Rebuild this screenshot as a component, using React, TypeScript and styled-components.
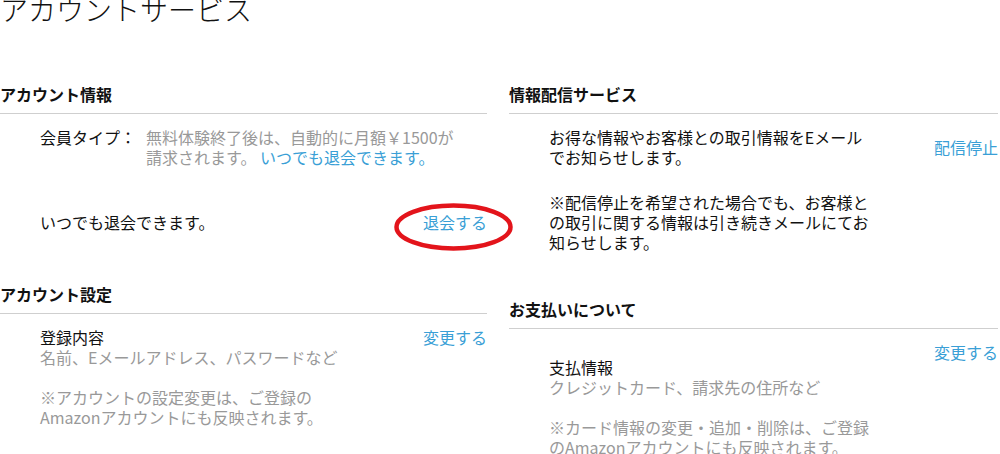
import React from "react";
import styled, { createGlobalStyle } from "styled-components";

const GlobalStyle = createGlobalStyle`
  html, body {
    margin: 0;
    padding: 0;
    background: #fff;
    overflow: hidden;
  }
  body {
    font-family: "Noto Sans CJK JP", "Noto Sans", sans-serif;
    color: #111;
    font-size: 16px;
    line-height: 20px;
  }
`;

const Page = styled.div`
  width: 998px;
`;

const Title = styled.h1`
  margin: -5px 0 0;
  font-size: 28px;
  line-height: 28px;
  font-weight: 300;
  color: #111;
`;

const Columns = styled.div`
  display: flex;
  gap: 22px;
  margin-top: 61px;
`;

const Column = styled.div<{ $width?: number }>`
  display: flex;
  flex-direction: column;
  ${(p: { $width?: number }) => (p.$width ? `width: ${p.$width}px;` : "flex: 1;")}
`;

const Section = styled.section<{ $gap?: number }>`
  margin-top: ${(p: { $gap?: number }) => p.$gap ?? 0}px;
`;

const Heading = styled.h2`
  margin: 0;
  padding-bottom: 9px;
  border-bottom: 1px solid #cfcfcf;
  font-size: 16px;
  line-height: 20px;
  font-weight: 700;
  color: #111;
`;

const Body = styled.div`
  padding: 13px 0 0 40px;
`;

const Row = styled.div<{ $align?: string; $top?: number }>`
  display: flex;
  justify-content: space-between;
  align-items: ${(p: { $align?: string }) => p.$align ?? "flex-start"};
  margin-top: ${(p: { $top?: number }) => p.$top ?? 0}px;
`;

const Content = styled.div<{ $offset?: number }>`
  padding-top: ${(p: { $offset?: number }) => p.$offset ?? 0}px;
`;

const Text = styled.p<{ $muted?: boolean; $top?: number }>`
  margin: ${(p: { $top?: number }) => p.$top ?? 0}px 0 0;
  color: ${(p: { $muted?: boolean }) => (p.$muted ? "#999" : "#111")};
`;

const Field = styled.div`
  display: grid;
  grid-template-columns: 106px auto;
`;

const Link = styled.a`
  position: relative;
  color: #3a9fd6;
  text-decoration: none;
  white-space: nowrap;
  cursor: pointer;
`;

// red hand-drawn marker around the withdraw link
const Circle = styled.svg`
  position: absolute;
  left: -29px;
  top: -9px;
  width: 119px;
  height: 48px;
  overflow: visible;
  pointer-events: none;
`;

export default function App() {
  return (
    <>
      <GlobalStyle />
      <Page>
        <Title>アカウントサービス</Title>
        <Columns>
          <Column $width={487}>
            <Section>
              <Heading>アカウント情報</Heading>
              <Body>
                <Field>
                  <span>会員タイプ：</span>
                  <Text $muted>
                    無料体験終了後は、自動的に月額￥1500が
                    <br />
                    請求されます。 <Link>いつでも退会できます。</Link>
                  </Text>
                </Field>
                <Row $top={45} $align="center">
                  <span>いつでも退会できます。</span>
                  <Link>
                    退会する
                    <Circle viewBox="0 0 119 48">
                      <ellipse cx="59.5" cy="24" rx="57" ry="21.5" fill="none" stroke="#e3141b" strokeWidth="4.5" />
                    </Circle>
                  </Link>
                </Row>
              </Body>
            </Section>
            <Section $gap={52}>
              <Heading>アカウント設定</Heading>
              <Body>
                <Row>
                  <Content>
                    <Text>登録内容</Text>
                    <Text $muted>名前、Eメールアドレス、パスワードなど</Text>
                    <Text $muted $top={20}>
                      ※アカウントの設定変更は、ご登録の
                      <br />
                      Amazonアカウントにも反映されます。
                    </Text>
                  </Content>
                  <Link>変更する</Link>
                </Row>
              </Body>
            </Section>
          </Column>
          <Column>
            <Section>
              <Heading>情報配信サービス</Heading>
              <Body>
                <Row $align="center">
                  <Text>
                    お得な情報やお客様との取引情報をEメール
                    <br />
                    でお知らせします。
                  </Text>
                  <Link>配信停止</Link>
                </Row>
                <Text $top={25}>
                  ※配信停止を希望された場合でも、お客様と
                  <br />
                  の取引に関する情報は引き続きメールにてお
                  <br />
                  知らせします。
                </Text>
              </Body>
            </Section>
            <Section $gap={47}>
              <Heading>お支払いについて</Heading>
              <Body>
                <Row>
                  <Content $offset={15}>
                    <Text>支払情報</Text>
                    <Text $muted>クレジットカード、請求先の住所など</Text>
                    <Text $muted $top={20}>
                      ※カード情報の変更・追加・削除は、ご登録
                      <br />
                      のAmazonアカウントにも反映されます。
                    </Text>
                  </Content>
                  <Link>変更する</Link>
                </Row>
              </Body>
            </Section>
          </Column>
        </Columns>
      </Page>
    </>
  );
}
